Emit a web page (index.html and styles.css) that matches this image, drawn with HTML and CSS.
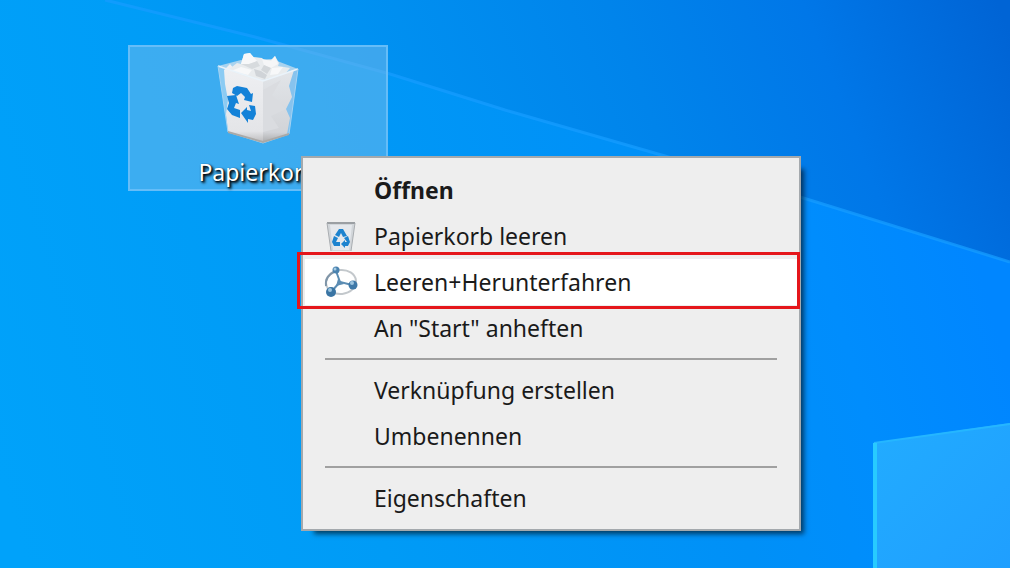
FILE: index.html
```html
<!DOCTYPE html>
<html lang="de">
<head>
    <meta charset="UTF-8">
    <meta name="viewport" content="width=device-width, initial-scale=1.0">
    <title>Desktop</title>
    <link rel="stylesheet" href="styles.css">
</head>
<body>

    <main class="desktop">
        <svg class="wallpaper" viewBox="0 0 1010 568" preserveAspectRatio="none" aria-hidden="true">
            <defs>
                <linearGradient id="sky" gradientUnits="userSpaceOnUse" x1="120" y1="260" x2="970" y2="-70">
                    <stop offset="0" stop-color="#009ef8"/>
                    <stop offset="0.3" stop-color="#0093f2"/>
                    <stop offset="0.6" stop-color="#0084eb"/>
                    <stop offset="0.8" stop-color="#0077e8"/>
                    <stop offset="1" stop-color="#0064d5"/>
                </linearGradient>
                <linearGradient id="beam" gradientUnits="userSpaceOnUse" x1="0" y1="480" x2="960" y2="200">
                    <stop offset="0" stop-color="#00a2fa"/>
                    <stop offset="0.35" stop-color="#009bf6"/>
                    <stop offset="0.7" stop-color="#0090f7"/>
                    <stop offset="0.85" stop-color="#008dfd"/>
                    <stop offset="1" stop-color="#0086ff"/>
                </linearGradient>
                <linearGradient id="pane" x1="0" y1="0" x2="1" y2="1">
                    <stop offset="0" stop-color="#22acff"/>
                    <stop offset="1" stop-color="#1f9fff"/>
                </linearGradient>
            </defs>
            <rect width="1010" height="568" fill="url(#sky)"/>
            <path d="M0 0H105L255 37L390 74L505 110L665 156L800 197L1010 262V568H0Z" fill="url(#beam)"/>
            <path d="M105 0L255 37L390 74L505 110L665 156L800 197L1010 262" fill="none" stroke="#159cff" stroke-opacity="0.75" stroke-width="3"/>
            <path d="M873 443L1010 423V568H873Z" fill="url(#pane)"/>
            <path d="M874 443L1010 424" fill="none" stroke="#25b6ff" stroke-width="2"/>
            <path d="M875 443V568" fill="none" stroke="#28cbff" stroke-width="4"/>
        </svg>

        <button class="shortcut" type="button">
            <svg class="shortcut-icon" viewBox="0 0 82 92" aria-hidden="true">
                <defs>
                    <linearGradient id="bin-front" x1="0" y1="0" x2="0" y2="1">
                        <stop offset="0" stop-color="#eff0f3"/>
                        <stop offset="0.85" stop-color="#e4e5e8"/>
                        <stop offset="1" stop-color="#b9b8b9"/>
                    </linearGradient>
                    <linearGradient id="bin-side" x1="0" y1="0" x2="0" y2="1">
                        <stop offset="0" stop-color="#e2e5e9"/>
                        <stop offset="0.85" stop-color="#d2d4d8"/>
                        <stop offset="1" stop-color="#a8a8a9"/>
                    </linearGradient>
                </defs>
                <path d="M1 14L24 8L55 7L81 17L46 29Z" fill="#d7e4ee" fill-opacity="0.7"/>
                <path d="M1 14L46 29V91L11 80Z" fill="#b5dbf5" fill-opacity="0.65"/>
                <path d="M81 17L46 29V91L72 82Z" fill="#a5cdec" fill-opacity="0.7"/>
                <path d="M7 18L13 12L18 18L46 28V91L11 80L9 62L11 48L8 32Z" fill="url(#bin-front)"/>
                <path d="M46 28L77 18L72 34L75 45L69 57L73 66L70 82L46 91Z" fill="url(#bin-side)"/>
                <path d="M46 38L64 28L55 43L69 57L54 64L62 76L46 80Z" fill="#dadce0"/>
                <path d="M11 18L20 11L24 12L27 2L33 1L36 5L45 6L47 8L54 8L58 4L62 11L61 14L73 16L68 22L46 28L30 25Z" fill="#e9ecee"/>
                <path d="M27 2L33 1L40 9L32 12L24 12Z" fill="#f7f8f9"/>
                <path d="M24 12L32 12L40 9L43 14L35 17Z" fill="#d7dbde"/>
                <path d="M45 7L54 9L58 4L61 12L54 16L47 13Z" fill="#f5f6f7"/>
                <path d="M47 13L54 16L50 22L44 18Z" fill="#d3d7da"/>
                <path d="M37 17L44 19L50 23L48 27L39 24Z" fill="#d0d4d8"/>
                <path d="M14 19L24 15L35 18L31 23Z" fill="#f7f8f9"/>
                <path d="M55 16L66 15L61 22L53 23Z" fill="#f7f8f9"/>
                <path d="M1 14L46 29L81 17" fill="none" stroke="#eaf3fa" stroke-width="1.5"/>
                <path d="M1 14L11 80L46 91L72 82L81 17" fill="none" stroke="#a5d3f3"/>
                <path d="M11 79L46 89L72 81V83L46 91L11 81Z" fill="#aaa9a7"/>
                <path d="M16 36L20 34L30 36L34 42L36 41L35 50L27 48L28 45L24 41L20 44L15 41Z" fill="#1482d8"/>
                <path d="M10 44L19 43L22 52L19 51L17 56L23 58V66L15 63L10 57L12 51Z" fill="#1482d8"/>
                <path d="M24 61L30 55V58L34 59L32 53L38 54L39 62L36 68L31 67V71Z" fill="#1482d8"/>
            </svg>
            <span class="shortcut-label">Papierkorb</span>
        </button>

        <menu class="context-menu">
            <li><button class="menu-item menu-item-default" type="button">Öffnen</button></li>
            <li>
                <button class="menu-item" type="button">
                    <svg class="menu-icon" viewBox="0 0 36 32" aria-hidden="true">
                        <path d="M4 3H32L28 31H8Z" fill="#d2d6da"/>
                        <path d="M7 5H29L26 30H10Z" fill="#e5e8ec"/>
                        <path d="M4 3H32" stroke="#9b9fa3" stroke-width="2"/>
                        <path d="M4 3L8 31M32 3L28 31" stroke="#a9adb1"/>
                        <path d="M16 9H20L24 16L20 17L18 13L16 17L12 15Z" fill="#1c83cf"/>
                        <path d="M11 16L15 18L13 22H17V26H11L9 22Z" fill="#1c83cf"/>
                        <path d="M25 16L27 22L25 26H22V28L18 24L22 20V22H24L21 18Z" fill="#1c83cf"/>
                    </svg>
                    Papierkorb leeren
                </button>
            </li>
            <li>
                <button class="menu-item menu-item-active" type="button">
                    <svg class="menu-icon" viewBox="0 0 36 32" aria-hidden="true">
                        <ellipse cx="18" cy="16" rx="15" ry="12" fill="none" stroke="#c3c8cc" stroke-width="2" transform="rotate(-6 18 16)"/>
                        <path d="M3 20C2 13 6 8 11 6" fill="none" stroke="#7f95a8" stroke-width="2"/>
                        <path d="M13 5L17 16L29 19M17 16L8 26" fill="none" stroke="#5c8db3" stroke-width="2"/>
                        <path d="M15 13L21 18L13 20Z" fill="#5c8db3"/>
                        <circle cx="13" cy="4" r="3.5" fill="#4a82af"/>
                        <circle cx="30" cy="19" r="4.5" fill="#3f79a8"/>
                        <circle cx="8" cy="26" r="5" fill="#3a75a4"/>
                        <circle cx="12" cy="3" r="1.5" fill="#a5cbe3"/>
                        <circle cx="29" cy="17" r="2" fill="#9cc5e0"/>
                        <circle cx="7" cy="24" r="2" fill="#9cc5e0"/>
                    </svg>
                    Leeren+Herunterfahren
                </button>
            </li>
            <li><button class="menu-item" type="button">An "Start" anheften</button></li>
            <li class="separator" role="separator"></li>
            <li><button class="menu-item" type="button">Verknüpfung erstellen</button></li>
            <li><button class="menu-item" type="button">Umbenennen</button></li>
            <li class="separator" role="separator"></li>
            <li><button class="menu-item" type="button">Eigenschaften</button></li>
        </menu>
    </main>

</body>
</html>
```
FILE: styles.css
```css
* {
    box-sizing: border-box;
}
body {
    margin: 0;
    font-family: "Noto Sans", "Open Sans", sans-serif;
    font-size: 23px;
}
button {
    font: inherit;
}
.desktop {
    position: relative;
    min-height: 100vh;
    overflow: hidden;
    background-color: #0094fb;
}
.wallpaper {
    position: absolute;
    inset: 0;
    width: 100%;
    height: 100%;
}

/* desktop shortcut */
.shortcut {
    position: absolute;
    left: 128px;
    top: 45px;
    width: 260px;
    display: flex;
    flex-direction: column;
    align-items: center;
    gap: 12px;
    padding: 5px 0 0;
    border: 2px solid #65bdf8;
    background-color: rgba(126, 190, 235, 0.48);
    color: white;
}
.shortcut-icon {
    width: 82px;
    height: 92px;
}
.shortcut-label {
    line-height: 33px;
    text-shadow: 1px 1px 2px #000, 2px 2px 3px #000;
}

/* context menu */
.context-menu {
    position: absolute;
    left: 301px;
    top: 156px;
    width: 500px;
    margin: 0;
    padding: 9px 2px 8px;
    list-style: none;
    background-color: #eee;
    border: 2px solid #a4a9ad;
    box-shadow: 8px 8px 5px -5px rgba(0, 0, 0, 0.6);
}
.menu-item {
    position: relative;
    display: flex;
    align-items: center;
    width: 100%;
    height: 46px;
    padding: 0 0 0 69px;
    border: none;
    background: none;
    color: #1a1a1a;
    text-align: left;
}
.menu-item-default {
    font-weight: bold;
}
.menu-item:hover,
.menu-item-active {
    background-color: white;
}
/* red marking around the active entry */
.menu-item-active::after {
    content: "";
    position: absolute;
    inset: -7px -3px -4px -8px;
    border: 3px solid #e5161b;
}
.menu-icon {
    width: 36px;
    height: 32px;
    margin-left: -51px;
    margin-right: 15px;
}
.separator {
    height: 16px;
    padding: 7px 20px;
}
.separator::before {
    content: "";
    display: block;
    height: 2px;
    background-color: #a0a0a0;
}
```
